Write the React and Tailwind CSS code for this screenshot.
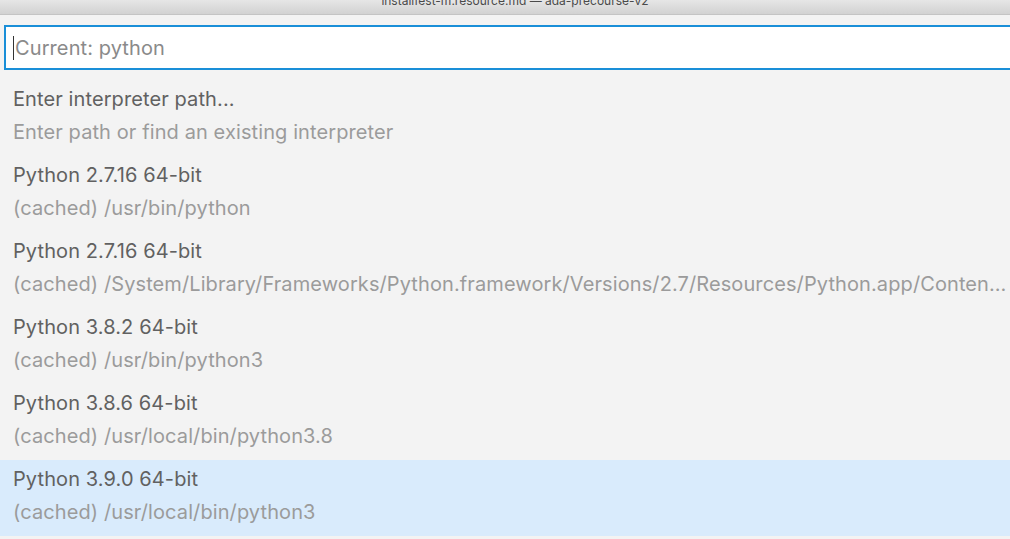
export default function App() {
  const items = [
    { label: "Enter interpreter path...", desc: "Enter path or find an existing interpreter" },
    { label: "Python 2.7.16 64-bit", desc: "(cached) /usr/bin/python" },
    { label: "Python 2.7.16 64-bit", desc: "(cached) /System/Library/Frameworks/Python.framework/Versions/2.7/Resources/Python.app/Contents/MacOS/Python" },
    { label: "Python 3.8.2 64-bit", desc: "(cached) /usr/bin/python3" },
    { label: "Python 3.8.6 64-bit", desc: "(cached) /usr/local/bin/python3.8" },
    { label: "Python 3.9.0 64-bit", desc: "(cached) /usr/local/bin/python3", active: true },
  ];
  return (
    <div
      className="w-[1010px] h-[539px] overflow-hidden bg-[#f3f3f3] flex flex-col"
      style={{ fontFamily: 'Inter, "Noto Sans", sans-serif' }}
    >
      <div className="h-[15px] shrink-0 bg-gradient-to-b from-[#e6e6e6] to-[#d2d2d2] border-b border-[#c4c4c4] overflow-hidden flex justify-center">
        <div className="text-[12px] leading-[12px] -mt-[5px] text-[#4a4a4a] pl-[20px]">
          installfest-m.resource.md — ada-precourse-v2
        </div>
      </div>
      <div className="pt-[10px] pl-[4px] shrink-0">
        <div className="h-[45px] bg-white border-2 border-[#1a8fd8] border-r-0 flex items-center pl-[7px]">
          <div className="w-px h-[24px] bg-[#333] mr-[1px]" />
          <span className="text-[20px] text-[#8a8a8a] tracking-[0.1px]">Current: python</span>
        </div>
      </div>
      <div className="mt-[10px] flex flex-col">
        {items.map((it, i) => (
          <div
            key={i}
            className={
              "h-[76px] shrink-0 pl-[13px] pt-[3px] flex flex-col tracking-[0.1px] " +
              (it.active ? "bg-[#d9ebfc]" : "")
            }
          >
            <div className="h-[33px] leading-[33px] text-[20px] text-[#616161] whitespace-nowrap">
              {it.label}
            </div>
            <div className="h-[33px] leading-[33px] text-[20px] text-[#9b9b9b] whitespace-nowrap overflow-hidden text-ellipsis pr-[2px]">
              {it.desc}
            </div>
          </div>
        ))}
      </div>
    </div>
  );
}
